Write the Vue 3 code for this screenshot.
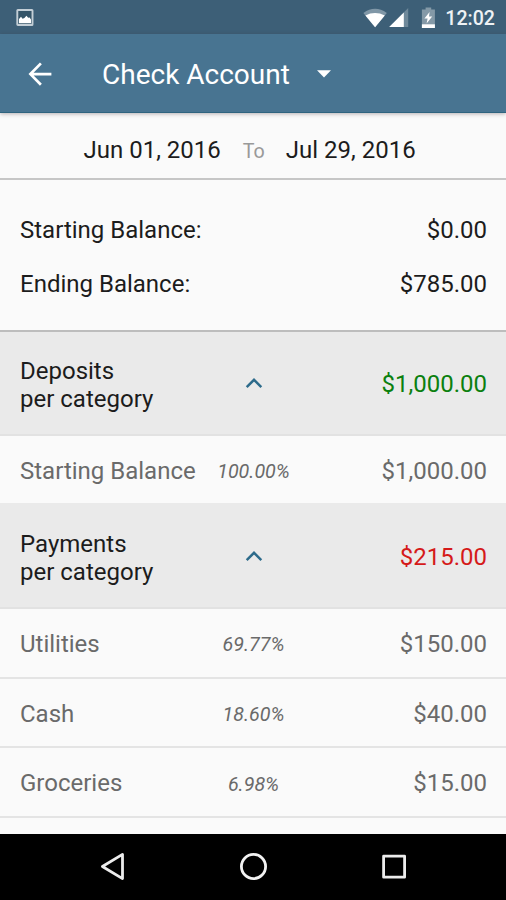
<script setup>
const balances = [
  { label: 'Starting Balance:', amount: '$0.00' },
  { label: 'Ending Balance:', amount: '$785.00' },
]

const groups = [
  {
    name: 'Deposits',
    kind: 'deposit',
    total: '$1,000.00',
    rows: [{ name: 'Starting Balance', share: '100.00%', amount: '$1,000.00' }],
  },
  {
    name: 'Payments',
    kind: 'payment',
    total: '$215.00',
    rows: [
      { name: 'Utilities', share: '69.77%', amount: '$150.00' },
      { name: 'Cash', share: '18.60%', amount: '$40.00' },
      { name: 'Groceries', share: '6.98%', amount: '$15.00' },
    ],
  },
]
</script>

<template>
  <div class="screen">
    <div class="status">
      <svg class="photo" width="20" height="20" viewBox="0 0 20 20">
        <rect x="2.3" y="2" width="15.2" height="15" rx="0.6" fill="#345468" stroke="#c3ced6" stroke-width="1.9" />
        <path d="M4 15.2v-4.2l2-2.2 1.6 2 1.8-.8 2-2.2 1.8 2 1.4-.4 1.4 2v3.8z" fill="#fff" />
      </svg>
      <div class="indicators">
        <svg class="wifi" width="25" height="20" viewBox="0 0 25 20">
          <path d="M0.4 4.9Q12 -3.2 23.8 4.9L12.1 19.2z" fill="#8097a7" />
          <path d="M2.4 7.4Q12 2.6 21.8 7.4L12.1 19.2z" fill="#fff" />
        </svg>
        <svg class="signal" width="20" height="20" viewBox="0 0 20 20">
          <path d="M19.2 0V19H0.2z" fill="#6f899a" />
          <path d="M14.8 4.4V19H0.2z" fill="#fff" />
        </svg>
        <svg class="battery" width="15" height="22" viewBox="0 0 15 22">
          <path d="M4.6 0.6h5.6v2h3.7V21H0.9V2.6h3.7z" fill="#8499a7" />
          <path d="M0.9 17.3h13V21h-13z" fill="#fff" />
          <path d="M8.6 5L3.4 11.6h3.2L5.6 16.4l5.6-6.8H8z" fill="#fff" />
        </svg>
        <span class="clock">12:02</span>
      </div>
    </div>

    <header class="appbar">
      <svg class="back" width="24" height="24" viewBox="0 0 24 24" fill="none" stroke="#fff" stroke-width="2.7">
        <path d="M23.4 12.1H2.4M12.9 1.4L2.4 12.1l10.5 10.7" />
      </svg>
      <h1 class="title">Check Account</h1>
      <svg class="caret" width="14" height="8" viewBox="0 0 14 8"><path d="M0 0.3h14L7 7.5z" fill="#fff" /></svg>
    </header>

    <main class="content">
      <div class="range">
        <span class="from">Jun 01, 2016</span>
        <span class="to">To</span>
        <span class="until">Jul 29, 2016</span>
      </div>

      <section class="balances">
        <div v-for="b in balances" :key="b.label" class="balance">
          <span>{{ b.label }}</span>
          <span class="amount">{{ b.amount }}</span>
        </div>
      </section>

      <section v-for="g in groups" :key="g.name">
        <div class="group" :class="g.kind">
          <span class="group-name">{{ g.name }}<br />per category</span>
          <svg class="chevron" width="18" height="12" viewBox="0 0 18 12" fill="none" stroke="#2d6b8b" stroke-width="2.5">
            <path d="M1.7 10.1L9 2.8l7.3 7.3" />
          </svg>
          <span class="amount">{{ g.total }}</span>
        </div>
        <div v-for="r in g.rows" :key="r.name" class="row" :class="g.kind">
          <span>{{ r.name }}</span>
          <span class="share">{{ r.share }}</span>
          <span class="amount">{{ r.amount }}</span>
        </div>
      </section>
    </main>

    <nav class="navbar">
      <svg width="28" height="30" viewBox="0 0 28 30" fill="none" stroke="#ececec" stroke-width="2.8" stroke-linejoin="round">
        <path d="M24.5 2.4v24.2L4.4 14.5z" />
      </svg>
      <svg width="30" height="30" viewBox="0 0 30 30" fill="none" stroke="#f2f2f2" stroke-width="2.8">
        <circle cx="15.5" cy="14.5" r="12.1" />
      </svg>
      <svg width="28" height="30" viewBox="0 0 28 30" fill="none" stroke="#ececec" stroke-width="2.8" stroke-linejoin="round">
        <rect x="3.6" y="4.2" width="21" height="21" />
      </svg>
    </nav>
  </div>
</template>

<style>
body {
  margin: 0;
}
</style>

<style scoped>
.screen {
  display: flex;
  flex-direction: column;
  width: 506px;
  height: 900px;
  overflow: hidden;
  background: #fafafa;
  color: #1c1c1c;
  font-family: Roboto, "Liberation Sans", sans-serif;
  font-size: 24px;
  line-height: 28px;
}
.status {
  flex: none;
  display: flex;
  justify-content: space-between;
  box-sizing: border-box;
  height: 34px;
  padding: 8px 11px 0 15px;
  background: #3d5f77;
}
.indicators {
  display: flex;
  align-items: flex-start;
}
.signal {
  margin-left: 1px;
}
.battery {
  margin: -1px 0 0 12px;
}
.clock {
  margin: -3px 0 0 9px;
  color: #eef2f5;
  font-size: 19.6px;
  font-weight: 500;
}
.appbar {
  flex: none;
  position: relative;
  display: flex;
  align-items: center;
  box-sizing: border-box;
  height: 79px;
  padding-left: 28px;
  background: #487491;
  border-bottom: 1px solid #2f647f;
  box-shadow: 0 1px 4px rgba(60, 40, 50, 0.35);
}
.back {
  margin-top: 1px;
}
.title {
  margin: 3px 0 0 50px;
  color: #fff;
  font-size: 28px;
  font-weight: 400;
  line-height: 34px;
}
.caret {
  margin: 2px 0 0 27px;
}
.content {
  flex: 1;
  min-height: 0;
  overflow: hidden;
}
.range {
  display: flex;
  align-items: baseline;
  box-sizing: border-box;
  height: 67px;
  padding: 23px 0 0 83.5px;
  border-bottom: 2px solid #c6c6c6;
}
.to {
  margin: 0 21px 0 22px;
  color: #999;
  font-size: 19.7px;
}
.balances {
  display: flex;
  flex-direction: column;
  gap: 26px;
  box-sizing: border-box;
  height: 152px;
  padding: 36px 19px 0 20px;
  border-bottom: 2px solid #bdbdbd;
}
.balance {
  display: flex;
  justify-content: space-between;
}
.group,
.row {
  display: grid;
  grid-template-columns: 186px 95px 1fr;
  align-items: center;
  box-sizing: border-box;
  padding: 0 19px 0 20px;
}
.amount {
  text-align: right;
}
.group {
  height: 104px;
  padding-top: 2px;
  background: #eaeaea;
  border-bottom: 2px solid #e2e2e2;
}
.group-name {
  padding-top: 2px;
}
.group.payment {
  height: 106px;
  padding-top: 4px;
}
.group.deposit .amount {
  color: #0b800f;
}
.group.payment .amount {
  color: #d51a1a;
}
.chevron,
.share {
  justify-self: center;
}
.chevron {
  margin-bottom: 2px;
}
.group.payment .chevron {
  margin-bottom: 3px;
}
.row {
  height: 69.7px;
  padding-top: 2px;
  color: #6a6a6a;
  border-bottom: 2px solid #e4e4e4;
}
.row.deposit {
  height: 67px;
  border-bottom: 0;
}
.share {
  padding-top: 3px;
  font-size: 19.7px;
  font-style: italic;
}
.navbar {
  flex: none;
  display: flex;
  justify-content: center;
  align-items: center;
  gap: 112px;
  height: 66px;
  background: #000;
}
</style>
